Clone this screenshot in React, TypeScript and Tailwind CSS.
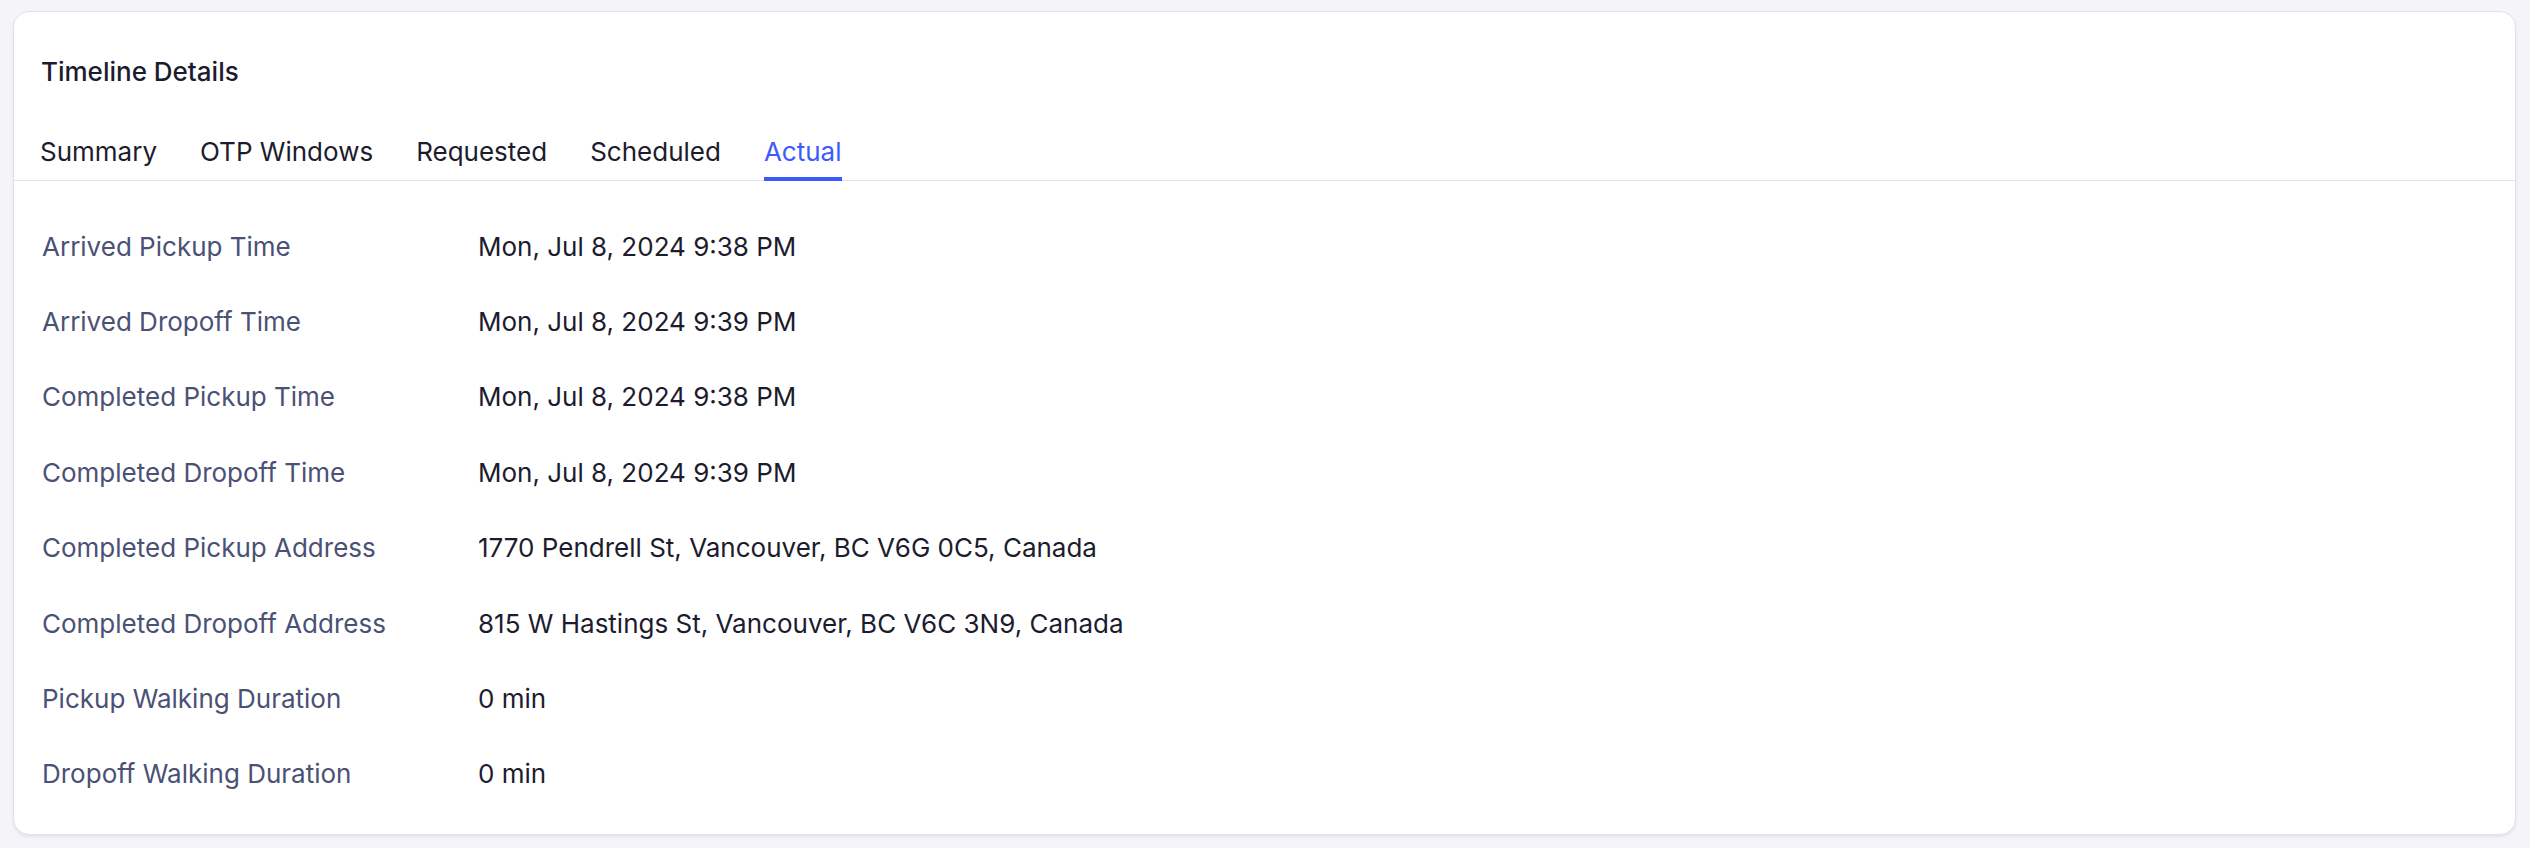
import { useState } from "react";

const tabs = ["Summary", "OTP Windows", "Requested", "Scheduled", "Actual"];

const rows: [string, string][] = [
  ["Arrived Pickup Time", "Mon, Jul 8, 2024 9:38 PM"],
  ["Arrived Dropoff Time", "Mon, Jul 8, 2024 9:39 PM"],
  ["Completed Pickup Time", "Mon, Jul 8, 2024 9:38 PM"],
  ["Completed Dropoff Time", "Mon, Jul 8, 2024 9:39 PM"],
  ["Completed Pickup Address", "1770 Pendrell St, Vancouver, BC V6G 0C5, Canada"],
  ["Completed Dropoff Address", "815 W Hastings St, Vancouver, BC V6C 3N9, Canada"],
  ["Pickup Walking Duration", "0 min"],
  ["Dropoff Walking Duration", "0 min"],
];

export default function App() {
  const [active, setActive] = useState("Actual");

  return (
    <div className="h-[848px] bg-[#f4f4f9] pt-[11px] pr-[14px] pb-[13px] pl-[13px] font-['Inter','Liberation_Sans',sans-serif] text-[26px] text-[#1c1c2e]">
      <div className="h-full rounded-[16px] border border-[#e1e1ec] bg-white pt-[42px] shadow-[0_2px_3px_rgba(40,40,90,0.08)]">
        <h2 className="pl-[27px] font-medium leading-[36px]">Timeline Details</h2>

        <div className="mt-[44px] flex gap-[43px] border-b border-[#e3e3ee] pl-[26px]">
          {tabs.map((tab) => (
            <button
              key={tab}
              onClick={() => setActive(tab)}
              className={
                tab === active
                  ? "-mb-px border-b-4 border-[#3d5afe] pb-[7px] leading-[36px] text-[#3d5afe]"
                  : "-mb-px border-b-4 border-transparent pb-[7px] leading-[36px] text-[#1c1c2e]"
              }
            >
              {tab}
            </button>
          ))}
        </div>

        <div className="pt-[28px] pl-[28px]">
          {rows.map(([label, value]) => (
            <div key={label} className="grid grid-cols-[436px_1fr] py-[19.7px] leading-[36px]">
              <span className="text-[#4a5175]">{label}</span>
              <span>{value}</span>
            </div>
          ))}
        </div>
      </div>
    </div>
  );
}
